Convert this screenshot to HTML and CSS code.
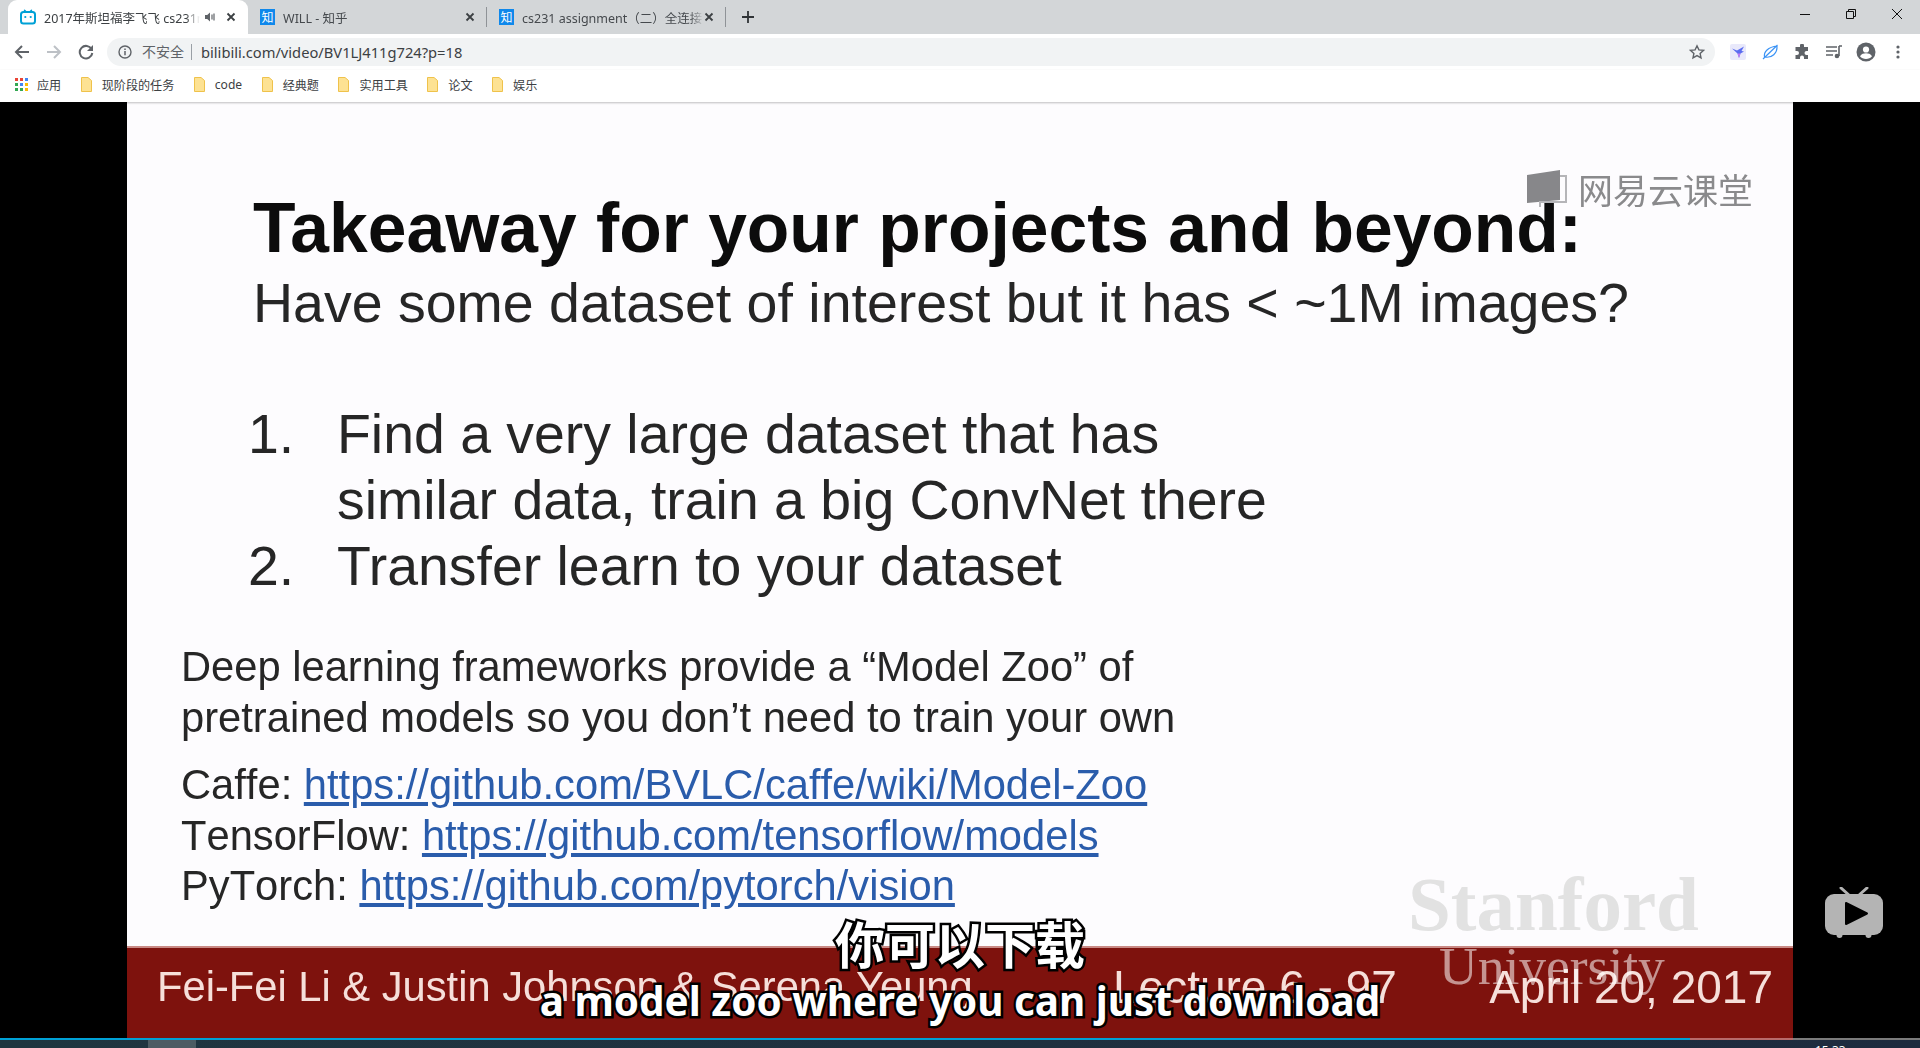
FILE: index.html
```html
<!DOCTYPE html>
<html lang="zh-CN">
<head>
  <meta charset="UTF-8">
  <title>2017年斯坦福李飞飞 cs231n</title>
  <link rel="stylesheet" href="styles.css">
</head>
<body>
  <!-- tab strip -->
  <div class="tabbar">
    <div class="tab active">
      <svg class="favicon" width="16" height="16" viewBox="0 0 16 16"><path d="M4.5 1.2 6.3 3M11.5 1.2 9.7 3" stroke="#00a1d6" stroke-width="1.5" stroke-linecap="round"/><rect x="1" y="3" width="14" height="11.5" rx="2.5" fill="none" stroke="#00a1d6" stroke-width="2"/><circle cx="5.3" cy="8" r="1.1" fill="#00a1d6"/><circle cx="10.7" cy="8" r="1.1" fill="#00a1d6"/></svg>
      <span class="tab-title">2017年斯坦福李飞飞 cs231n</span>
      <svg class="mute" width="12" height="12" viewBox="0 0 12 12"><path d="M1 4h2.2L6 1.5v9L3.2 8H1z" fill="#5f6368"/><path d="M8 3.5v5M10 2.5v7" stroke="#5f6368" stroke-width="1.2"/></svg>
      <svg class="close" width="10" height="10" viewBox="0 0 10 10"><path d="M1.5 1.5l7 7M8.5 1.5l-7 7" stroke="#3c4043" stroke-width="1.8"/></svg>
    </div>
    <div class="tab">
      <span class="zhi">知</span>
      <span class="tab-title">WILL - 知乎</span>
      <svg class="close" width="10" height="10" viewBox="0 0 10 10"><path d="M1.5 1.5l7 7M8.5 1.5l-7 7" stroke="#3c4043" stroke-width="1.8"/></svg>
    </div>
    <div class="tab">
      <span class="zhi">知</span>
      <span class="tab-title">cs231 assignment（二）全连接</span>
      <svg class="close" width="10" height="10" viewBox="0 0 10 10"><path d="M1.5 1.5l7 7M8.5 1.5l-7 7" stroke="#3c4043" stroke-width="1.8"/></svg>
    </div>
    <svg class="newtab" width="14" height="14" viewBox="0 0 14 14"><path d="M7 1v12M1 7h12" stroke="#2f3336" stroke-width="1.8"/></svg>
    <div class="winctl">
      <svg width="12" height="12" viewBox="0 0 12 12"><path d="M1 6.5h10" stroke="#111" stroke-width="1"/></svg>
      <svg width="12" height="12" viewBox="0 0 12 12"><path d="M1.5 3.5h7v7h-7zM3.5 3.5v-2h7v7h-2" fill="none" stroke="#111" stroke-width="1"/></svg>
      <svg width="12" height="12" viewBox="0 0 12 12"><path d="M1 1l10 10M11 1 1 11" stroke="#111" stroke-width="1"/></svg>
    </div>
  </div>

  <!-- address bar -->
  <div class="toolbar">
    <svg class="navbtn" width="16" height="16" viewBox="0 0 16 16"><path d="M15 8H2M8 2 2 8l6 6" fill="none" stroke="#5f6368" stroke-width="2"/></svg>
    <svg class="navbtn" width="16" height="16" viewBox="0 0 16 16"><path d="M1 8h13M8 2l6 6-6 6" fill="none" stroke="#bdc1c6" stroke-width="2"/></svg>
    <svg class="navbtn" width="16" height="16" viewBox="0 0 16 16"><path d="M13.6 5.2A6.3 6.3 0 1 0 14.3 9" fill="none" stroke="#5f6368" stroke-width="2"/><path d="M15 1v6H9z" fill="#5f6368"/></svg>
    <div class="omnibox">
      <svg width="14" height="14" viewBox="0 0 14 14"><circle cx="7" cy="7" r="6" fill="none" stroke="#5f6368" stroke-width="1.4"/><path d="M7 6v4.2M7 3.4v1.6" stroke="#5f6368" stroke-width="1.5"/></svg>
      <span class="insecure">不安全</span>
      <span class="url">bilibili.com/video/BV1LJ411g724?p=18</span>
      <svg class="star" width="16" height="16" viewBox="0 0 16 16"><path d="m8 1.8 1.9 4.1 4.5.5-3.3 3 .9 4.5L8 11.6l-4 2.3.9-4.5-3.3-3 4.5-.5z" fill="none" stroke="#5f6368" stroke-width="1.4"/></svg>
    </div>
    <div class="extensions">
      <svg width="16" height="16" viewBox="0 0 16 16"><rect width="16" height="16" rx="2" fill="#e9e9fb"/><path d="M2 4.5 7 6.5 14 2.5 11.5 7 14 7.5 10.5 9.5 9 14 7.5 9.5z" fill="#5a6cf0"/><path d="M7.5 9.5 9 14l1.5-4.5z" fill="#c27bf2"/></svg>
      <svg width="17" height="16" viewBox="0 0 17 16"><path d="M1 15 15.5 1M2.5 13C1.5 8 6 3 15 2c.5 7-5 12.5-12.5 11z" fill="none" stroke="#3b93f5" stroke-width="1.2"/></svg>
      <svg width="16" height="16" viewBox="0 0 16 16"><path d="M6 1.5a2 2 0 0 1 4 0V3h4v4h-1.5a2 2 0 0 0 0 4H14v4h-4v-1.5a2 2 0 0 0-4 0V15H1.5v-4H3a2 2 0 0 0 0-4H1.5V3H6z" fill="#5f6368"/></svg>
      <svg width="16" height="14" viewBox="0 0 16 14"><path d="M0 2h11M0 6h11M0 10h7" stroke="#5f6368" stroke-width="1.4"/><path d="M13 1h3M13 1v10" stroke="#5f6368" stroke-width="1.6"/><circle cx="11" cy="11" r="2.3" fill="#5f6368"/></svg>
      <svg width="20" height="20" viewBox="0 0 20 20"><circle cx="10" cy="10" r="9.5" fill="#5f6368"/><circle cx="10" cy="7.5" r="3.1" fill="#fff"/><path d="M4 14.2c1.5-2.4 3.7-3 6-3s4.5.6 6 3c-1.4 1.800-3.600 2.800-6 2.800s-4.600-1-6-2.800z" fill="#fff"/></svg>
      <svg width="4" height="14" viewBox="0 0 4 14"><circle cx="2" cy="2" r="1.6" fill="#5f6368"/><circle cx="2" cy="7" r="1.6" fill="#5f6368"/><circle cx="2" cy="12" r="1.6" fill="#5f6368"/></svg>
    </div>
  </div>

  <!-- bookmarks -->
  <div class="bookmarks">
    <div class="bm apps">
      <svg width="14" height="14" viewBox="0 0 14 14"><path fill="#ea4335" d="M0 0h3v3H0z"/><path fill="#ea4335" d="M5 0h3v3H5z"/><path fill="#4285f4" d="M10 0h3v3h-3z"/><path fill="#34a853" d="M0 5h3v3H0z"/><path fill="#4285f4" d="M5 5h3v3H5z"/><path fill="#fbbc04" d="M10 5h3v3h-3z"/><path fill="#34a853" d="M0 10h3v3H0z"/><path fill="#34a853" d="M5 10h3v3H5z"/><path fill="#fbbc04" d="M10 10h3v3h-3z"/></svg>
      <span>应用</span>
    </div>
    <div class="bm"><svg width="11" height="15" viewBox="0 0 11 15"><path d="M.5.5h6.500l3.500 3v11H.5z" fill="#fde293" stroke="#efc24b"/></svg><span>现阶段的任务</span></div>
    <div class="bm"><svg width="11" height="15" viewBox="0 0 11 15"><path d="M.5.5h6.500l3.500 3v11H.5z" fill="#fde293" stroke="#efc24b"/></svg><span>code</span></div>
    <div class="bm"><svg width="11" height="15" viewBox="0 0 11 15"><path d="M.5.5h6.500l3.500 3v11H.5z" fill="#fde293" stroke="#efc24b"/></svg><span>经典题</span></div>
    <div class="bm"><svg width="11" height="15" viewBox="0 0 11 15"><path d="M.5.5h6.500l3.500 3v11H.5z" fill="#fde293" stroke="#efc24b"/></svg><span>实用工具</span></div>
    <div class="bm"><svg width="11" height="15" viewBox="0 0 11 15"><path d="M.5.5h6.500l3.500 3v11H.5z" fill="#fde293" stroke="#efc24b"/></svg><span>论文</span></div>
    <div class="bm"><svg width="11" height="15" viewBox="0 0 11 15"><path d="M.5.5h6.500l3.500 3v11H.5z" fill="#fde293" stroke="#efc24b"/></svg><span>娱乐</span></div>
  </div>

  <!-- video -->
  <div class="player">
    <div class="slide">
      <div class="slide-body">
        <h1 class="title">Takeaway for your projects and beyond:</h1>
        <p class="subtitle">Have some dataset of interest but it has &lt; ~1M images?</p>
        <ol class="steps">
          <li><span class="num">1.</span><span>Find a very large dataset that has<br>similar data, train a big ConvNet there</span></li>
          <li><span class="num">2.</span><span>Transfer learn to your dataset</span></li>
        </ol>
        <p class="note">Deep learning frameworks provide a “Model Zoo” of<br>pretrained models so you don’t need to train your own</p>
        <div class="links">
          <div>Caffe: <a>https://github.com/BVLC/caffe/wiki/Model-Zoo</a></div>
          <div>TensorFlow: <a>https://github.com/tensorflow/models</a></div>
          <div>PyTorch: <a>https://github.com/pytorch/vision</a></div>
        </div>
      </div>
      <div class="slide-foot">
        <span class="authors">Fei-Fei Li &amp; Justin Johnson &amp; Serena Yeung</span>
        <span class="lecture">Lecture 6 - 97</span>
        <span class="date">April 20, 2017</span>
      </div>

      <div class="watermark">
        <svg width="42" height="40" viewBox="0 0 42 40"><path d="M1 6 34 1v30L1 34z" fill="#87878a"/><path d="M34 7h6v26H14v5" fill="none" stroke="#b5b5b8" stroke-width="2"/></svg>
        <span>网易云课堂</span>
      </div>
      <div class="stanford">Stanford</div>
      <div class="university">University</div>
    </div>

    <svg class="tv" width="58" height="52" viewBox="0 0 58 52"><path d="M16 1l9 8M42 1l-9 8" stroke="#b4b4b4" stroke-width="3" stroke-linecap="round"/><rect y="7" width="58" height="41" rx="9" fill="#b4b4b4"/><circle cx="14.5" cy="48" r="3" fill="#b4b4b4"/><circle cx="43.5" cy="48" r="3" fill="#b4b4b4"/><path d="M21 16v21l21-10.5z" fill="#000" stroke="#000" stroke-width="2" stroke-linejoin="round"/></svg>

    <div class="captions">
      <div class="cap-zh">你可以下载</div>
      <div class="cap-en">a model zoo where you can just download</div>
    </div>
  </div>

  <div class="progress">
    <div class="played"></div>
    <div class="buffered"></div>
  </div>
  <div class="taskbar">
    <div class="task-btn"></div>
    <span class="clock">15:33</span>
  </div>
</body>
</html>
```

FILE: styles.css
```css
/* page */
* {
  box-sizing: border-box;
}
html, body {
  height: 100%;
}
body {
  margin: 0;
  display: flex;
  flex-direction: column;
  overflow: hidden;
  font-family: "Noto Sans", "Noto Sans CJK SC", sans-serif;
  background-color: #000;
}

/* tab strip */
.tabbar {
  height: 34px;
  flex: none;
  display: flex;
  align-items: stretch;
  padding-left: 8px;
  background-color: #d3d6d8;
}
.tab {
  width: 239px;
  display: flex;
  align-items: center;
  padding: 0 11px 0 12px;
  font-size: 12.5px;
  color: #45494d;
  position: relative;
}
.tab:nth-child(3)::after, .tab:nth-child(2)::after {
  content: "";
  position: absolute;
  right: 0;
  top: 7px;
  bottom: 7px;
  width: 1px;
  background-color: #8f9397;
}
.tab.active {
  width: 240px;
  padding-left: 12px;
  background-color: #fff;
  border-radius: 9px 9px 0 0;
  color: #3c4043;
}
.tab-title {
  flex: 1;
  min-width: 0;
  overflow: hidden;
  white-space: nowrap;
  margin-left: 8px;
  -webkit-mask-image: linear-gradient(to left, transparent 0, #000 14px);
  mask-image: linear-gradient(to left, transparent 0, #000 14px);
}
.favicon, .mute, .close, .zhi {
  flex: none;
}
.mute {
  margin: 0 10px 0 4px;
}
.close {
  margin-right: 1px;
}
.zhi {
  width: 15px;
  height: 16px;
  background-color: #0f88eb;
  color: #fff;
  font-size: 12px;
  line-height: 16px;
  text-align: center;
  font-family: "Noto Sans CJK SC", sans-serif;
}
.newtab {
  align-self: center;
  margin-left: 15px;
}
.winctl {
  margin-left: auto;
  display: flex;
  align-items: center;
  gap: 34px;
  padding: 0 17px 6px 0;
}

/* toolbar */
.toolbar {
  height: 36px;
  flex: none;
  display: flex;
  align-items: center;
  padding-left: 14px;
  background-color: #fff;
}
.navbtn {
  margin-right: 16px;
}
.omnibox {
  width: 1608px;
  height: 28px;
  margin-left: -3px;
  display: flex;
  align-items: center;
  padding: 0 10px 0 11px;
  background-color: #f1f3f4;
  border-radius: 14px;
}
.insecure {
  margin-left: 10px;
  padding-right: 7px;
  font-size: 14px;
  color: #5f6368;
  border-right: 1px solid #9aa0a6;
  line-height: 16px;
}
.url {
  margin-left: 9px;
  color: #3c4043;
  flex: 1;
  font-size: 14.7px;
}
.extensions {
  display: grid;
  grid-template-columns: repeat(6, 32px);
  justify-items: center;
  align-items: center;
  margin-left: 7px;
}

/* bookmarks */
.bookmarks {
  height: 32px;
  flex: none;
  display: flex;
  align-items: center;
  gap: 19.5px;
  padding: 0 0 3px 15px;
  background-color: #fff;
  font-size: 12.1px;
  color: #3c4043;
  box-shadow: 0 1px 2px rgba(0, 0, 0, 0.25);
  position: relative;
  z-index: 2;
}
.bm {
  display: flex;
  align-items: center;
  gap: 10px;
}
.apps {
  gap: 8px;
}

/* video */
.player {
  flex: 1;
  min-height: 0;
  position: relative;
  background-color: #000;
  padding: 0 127px;
}
.slide {
  height: 100%;
  display: flex;
  flex-direction: column;
  background-color: #fdfcfe;
  font-family: "Liberation Sans", Arial, sans-serif;
  color: #262626;
  filter: blur(0.7px);
  position: relative;
}
.slide-body {
  flex: 1;
  padding: 82px 0 0 54px;
}
.title {
  margin: 0 0 0 72px;
  font-size: 69.6px;
  line-height: 88px;
  color: #0c0c0c;
  white-space: nowrap;
}
.subtitle {
  margin: -4px 0 0 72px;
  font-size: 55.5px;
  line-height: 70px;
  white-space: nowrap;
}
.steps {
  margin: 63px 0 0 67px;
  padding: 0;
  list-style: none;
  font-size: 55.4px;
  line-height: 66px;
}
.steps li {
  display: flex;
}
.num {
  width: 89px;
  flex: none;
}
.note {
  margin: 43px 0 0;
  font-size: 41.7px;
  line-height: 50.5px;
}
.links {
  margin-top: 17px;
  font-size: 41.7px;
  line-height: 50.5px;
  font-kerning: none;
}
.links a {
  color: #2a5cab;
  text-decoration: underline;
}
.slide-foot {
  height: 92px;
  flex: none;
  display: flex;
  align-items: center;
  padding: 0 20px 12px 30px;
  background-color: #7e120d;
  border-top: 2px solid #c98a85;
  color: #f6dfda;
  font-size: 41.7px;
  white-space: nowrap;
}
.authors {
  width: 956px;
}
.lecture {
  font-size: 46px;
}
.date {
  margin-left: auto;
  font-size: 46px;
}

/* overlays on the video */
.watermark {
  position: absolute;
  left: 1399px;
  top: 67px;
  display: flex;
  align-items: center;
  gap: 10px;
  font-family: "Noto Sans CJK SC", sans-serif;
  font-size: 35px;
  line-height: 40px;
  color: #8a8a8c;
}
.stanford {
  position: absolute;
  left: 1281px;
  top: 762px;
  font-family: "Liberation Serif", serif;
  font-weight: bold;
  font-size: 77px;
  line-height: 80px;
  color: #e2e2e2;
}
.university {
  position: absolute;
  left: 1312px;
  top: 834px;
  font-family: "Liberation Serif", serif;
  font-size: 53.5px;
  line-height: 60px;
  color: rgba(255, 255, 255, 0.55);
}
.tv {
  position: absolute;
  left: 1825px;
  top: 785px;
}
.captions {
  position: absolute;
  left: 0;
  right: 0;
  top: 807px;
  text-align: center;
  font-family: "Noto Sans", "Noto Sans CJK SC", sans-serif;
  font-weight: bold;
  color: #fff;
  -webkit-text-stroke: 5px #000;
  paint-order: stroke fill;
}
.cap-zh {
  font-family: "Noto Sans CJK SC", sans-serif;
  font-size: 50px;
  line-height: 66px;
}
.cap-en {
  font-size: 40.4px;
  line-height: 52px;
}

/* bottom edge */
.progress {
  height: 2px;
  flex: none;
  display: flex;
  background-color: #7b7b7b;
}
.played {
  width: 1690px;
  background-color: #00a1d6;
}
.buffered {
  width: 103px;
  background-color: #b96b6b;
}
.taskbar {
  height: 8px;
  flex: none;
  position: relative;
  background: linear-gradient(to right, #1f3640, #1d2b3e);
  overflow: hidden;
}
.task-btn {
  position: absolute;
  left: 148px;
  top: 0;
  width: 48px;
  height: 8px;
  background-color: #4c5c63;
}
.clock {
  position: absolute;
  left: 1815px;
  top: 3px;
  font-size: 12px;
  line-height: 16px;
  color: #fff;
}
```
